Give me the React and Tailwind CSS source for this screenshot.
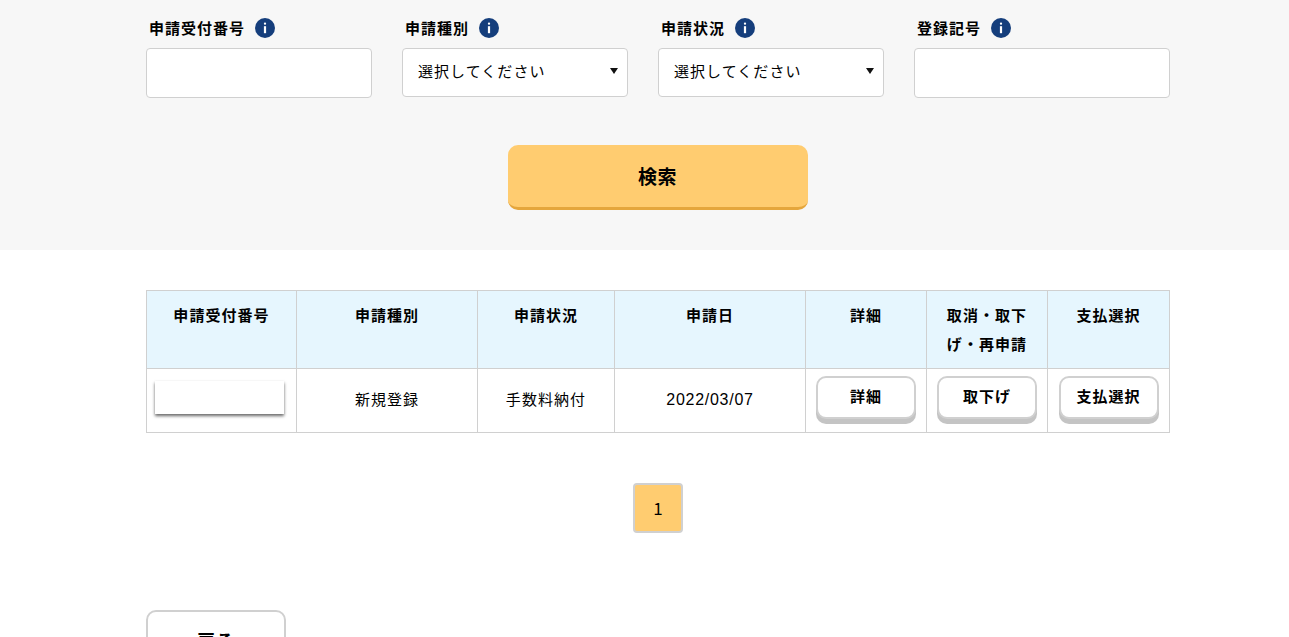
const fontStack = "font-['Noto_Sans_CJK_JP','Noto_Sans',sans-serif]";

const InfoIcon = () => (
  <svg width="20" height="20" viewBox="0 0 20 20" className="shrink-0">
    <circle cx="10" cy="10" r="10" fill="#153e7c" />
    <rect x="8.9" y="4.6" width="2.2" height="2.2" rx="1" fill="#fff" />
    <rect x="8.9" y="8.2" width="2.2" height="7" fill="#fff" />
  </svg>
);

const Field = ({ label, select }) => (
  <div>
    <div className="flex h-5 items-center gap-[10px] pl-[3px] text-[15px] font-bold tracking-[0.065em] text-black">
      <span>{label}</span>
      <InfoIcon />
    </div>
    {select ? (
      <div className="relative mt-[10px] flex h-[49px] items-center rounded-[4px] border border-[#d0d0d0] bg-white pb-[2px] pl-[15px] text-[15px] tracking-[0.07em] text-black">
        選択してください
        <svg width="8" height="6" viewBox="0 0 8 6" className="absolute right-[9px] top-[19px]">
          <path d="M0 0h8L4 6z" fill="#111" />
        </svg>
      </div>
    ) : (
      <input className="mt-[10px] block h-[50px] w-full rounded-[4px] border border-[#d0d0d0] bg-white" />
    )}
  </div>
);

const RowButton = ({ children }) => (
  <button className="mx-auto block h-[43px] w-[100px] rounded-[10px] border-2 border-[#d0d0d0] bg-white pb-[2px] text-[15px] font-bold tracking-[0.07em] text-black shadow-[0_5px_0_#c4c4c4]">
    {children}
  </button>
);

const th = "border border-[#d0d0d0] bg-[#e6f6fe] px-[9px] pb-[10px] pt-[9px] text-center align-top text-[15px] font-bold leading-[29px] tracking-[0.07em] text-black";
const td = "border border-[#d0d0d0] pb-[2px] text-center align-middle text-[15px] tracking-[0.07em] text-black";

export default function App() {
  return (
    <div className={`h-[637px] overflow-hidden bg-white ${fontStack}`}>
      <section className="h-[250px] bg-[#f7f7f7] pl-[146px] pt-[18px]">
        <div className="grid w-[1024px] grid-cols-[226px_226px_226px_256px] gap-[30px]">
          <Field label="申請受付番号" />
          <Field label="申請種別" select />
          <Field label="申請状況" select />
          <Field label="登録記号" />
        </div>
        <button className="ml-[362px] mt-[47px] block h-[65px] w-[300px] rounded-[10px] border-b-[3px] border-[#e5a63c] bg-[#ffcc70] pr-[1px] text-[19px] font-bold tracking-[0.03em] text-black">
          検索
        </button>
      </section>

      <main className="ml-[146px] w-[1024px] pt-[40px]">
        <table className="w-[1023px] table-fixed border-collapse">
          <colgroup>
            <col className="w-[150px]" />
            <col className="w-[181px]" />
            <col className="w-[137px]" />
            <col className="w-[191px]" />
            <col className="w-[121px]" />
            <col className="w-[121px]" />
            <col className="w-[122px]" />
          </colgroup>
          <thead>
            <tr>
              <th className={th}>申請受付番号</th>
              <th className={th}>申請種別</th>
              <th className={th}>申請状況</th>
              <th className={th}>申請日</th>
              <th className={th}>詳細</th>
              <th className={th}>取消・取下げ・再申請</th>
              <th className={th}>支払選択</th>
            </tr>
          </thead>
          <tbody>
            <tr className="h-[64px]">
              <td className="border border-[#d0d0d0] pb-[6px] align-middle">
                <div className="ml-[8px] h-[33px] w-[129px] bg-white shadow-[0_2px_3px_rgba(0,0,0,0.6)]" />
              </td>
              <td className={td}>新規登録</td>
              <td className={td}>手数料納付</td>
              <td className="border border-[#d0d0d0] pb-[2px] text-center align-middle font-['Liberation_Sans',sans-serif] text-[16px] tracking-[0.045em] text-black">2022/03/07</td>
              <td className="border border-[#d0d0d0] pb-[7px] align-middle"><RowButton>詳細</RowButton></td>
              <td className="border border-[#d0d0d0] pb-[7px] align-middle"><RowButton>取下げ</RowButton></td>
              <td className="border border-[#d0d0d0] pb-[7px] align-middle"><RowButton>支払選択</RowButton></td>
            </tr>
          </tbody>
        </table>

        <div className="mt-[50px] flex w-[1024px] justify-center">
          <button className="h-[50px] w-[50px] rounded-[4px] border-2 border-[#d0d0d0] bg-[#ffcc70] text-[17px] text-black">
            1
          </button>
        </div>

        <button className="mt-[77px] block h-[60px] w-[140px] rounded-[10px] border-2 border-[#d0d0d0] bg-white text-[18px] font-bold tracking-[0.05em] text-black">
          戻る
        </button>
      </main>
    </div>
  );
}
